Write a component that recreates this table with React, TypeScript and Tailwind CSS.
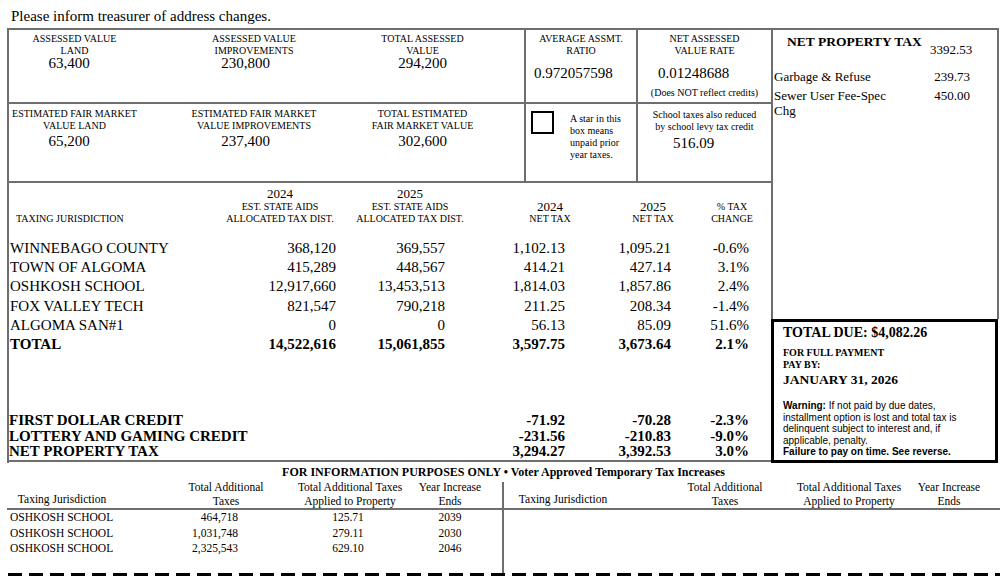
import React from 'react';

type Row = { name: string; aid24: string; aid25: string; tax24: string; tax25: string; change: string };

const rows: Row[] = [
  { name: 'WINNEBAGO COUNTY', aid24: '368,120', aid25: '369,557', tax24: '1,102.13', tax25: '1,095.21', change: '-0.6%' },
  { name: 'TOWN OF ALGOMA', aid24: '415,289', aid25: '448,567', tax24: '414.21', tax25: '427.14', change: '3.1%' },
  { name: 'OSHKOSH SCHOOL', aid24: '12,917,660', aid25: '13,453,513', tax24: '1,814.03', tax25: '1,857.86', change: '2.4%' },
  { name: 'FOX VALLEY TECH', aid24: '821,547', aid25: '790,218', tax24: '211.25', tax25: '208.34', change: '-1.4%' },
  { name: 'ALGOMA SAN#1', aid24: '0', aid25: '0', tax24: '56.13', tax25: '85.09', change: '51.6%' },
];

const credits = [
  { name: 'FIRST DOLLAR CREDIT', tax24: '-71.92', tax25: '-70.28', change: '-2.3%' },
  { name: 'LOTTERY AND GAMING CREDIT', tax24: '-231.56', tax25: '-210.83', change: '-9.0%' },
  { name: 'NET PROPERTY TAX', tax24: '3,294.27', tax25: '3,392.53', change: '3.0%' },
];

const increases = [
  { name: 'OSHKOSH SCHOOL', total: '464,718', applied: '125.71', ends: '2039' },
  { name: 'OSHKOSH SCHOOL', total: '1,031,748', applied: '279.11', ends: '2030' },
  { name: 'OSHKOSH SCHOOL', total: '2,325,543', applied: '629.10', ends: '2046' },
];

const cols = 'grid grid-cols-[227px_100px_109px_120px_106px_78px]';

function ValueCell({ label, value, className, numClass }: { label: string[]; value: string; className: string; numClass?: string }) {
  return (
    <div className={className}>
      {label.map((l) => (
        <div key={l} className="text-[10px] leading-[12px] text-center whitespace-nowrap">{l}</div>
      ))}
      <div className={`text-[15px] leading-[12px] text-center ${numClass ?? ''}`}>{value}</div>
    </div>
  );
}

function IncreaseHeader({ offsets }: { offsets: string[] }) {
  return (
    <div className="flex items-end h-[28px] text-[11.5px] leading-[14px] border-b-2 border-[#6e6e6e] text-center whitespace-nowrap">
      <div className={`w-[110px] pb-[2px] ${offsets[0]}`}>Taxing Jurisdiction</div>
      <div className={`w-[110px] ${offsets[1]}`}>Total Additional<br />Taxes</div>
      <div className={`w-[124px] ${offsets[2]}`}>Total Additional Taxes<br />Applied to Property</div>
      <div className={`w-[70px] ${offsets[3]}`}>Year Increase<br />Ends</div>
    </div>
  );
}

export default function App() {
  return (
    <div className="w-[1002px] h-[577px] overflow-hidden bg-white text-black font-['Liberation_Serif','Times_New_Roman',serif]">
      <div className="h-[28px] pl-[11px] pt-[7px] text-[15px] leading-[18px]">Please inform treasurer of address changes.</div>

      <div className="flex ml-[7px]">
        {/* main box */}
        <div className="w-[764px] border-l-2 border-t-2 border-[#6e6e6e]">
          <div className="flex h-[74px] border-b-2 border-[#6e6e6e]">
            <ValueCell className="w-[131px] pt-[3px]" label={['ASSESSED VALUE', 'LAND']} value="63,400" numClass="pr-[11px]" />
            <ValueCell className="w-[228px] pt-[3px]" label={['ASSESSED VALUE', 'IMPROVEMENTS']} value="230,800" numClass="pr-[17px]" />
            <ValueCell className="w-[109px] pt-[3px]" label={['TOTAL ASSESSED', 'VALUE']} value="294,200" />
            <div className="w-[47px]" />
            <div className="w-[112px] border-l-2 border-[#6e6e6e] pt-[3px]">
              <div className="text-[10px] leading-[12px] text-center">AVERAGE ASSMT.<br />RATIO</div>
              <div className="mt-[7px] pl-[8px] text-[15px] leading-[18px]">0.972057598</div>
            </div>
            <div className="w-[135px] border-l-2 border-[#6e6e6e] pt-[3px]">
              <div className="text-[10px] leading-[12px] text-center">NET ASSESSED<br />VALUE RATE</div>
              <div className="mt-[7px] pl-[20px] text-[15px] leading-[18px]">0.01248688</div>
              <div className="mt-[5px] text-[10px] leading-[12px] text-center whitespace-nowrap">(Does NOT reflect credits)</div>
            </div>
          </div>

          <div className="flex h-[79px] border-b-2 border-[#6e6e6e]">
            <div className="w-[131px] pt-[4px] text-center">
              <div className="text-[10px] leading-[12px] whitespace-nowrap">ESTIMATED FAIR MARKET<br />VALUE LAND</div>
              <div className="text-[15px] leading-[18px] pr-[11px]">65,200</div>
            </div>
            <div className="w-[228px] pt-[4px] text-center">
              <div className="text-[10px] leading-[12px] whitespace-nowrap">ESTIMATED FAIR MARKET<br />VALUE IMPROVEMENTS</div>
              <div className="text-[15px] leading-[18px] pr-[17px]">237,400</div>
            </div>
            <div className="w-[109px] pt-[4px] text-center">
              <div className="text-[10px] leading-[12px] whitespace-nowrap">TOTAL ESTIMATED<br />FAIR MARKET VALUE</div>
              <div className="text-[15px] leading-[18px]">302,600</div>
            </div>
            <div className="w-[47px]" />
            <div className="w-[112px] border-l-2 border-[#6e6e6e] flex items-start">
              <div className="mt-[7px] ml-[5px] w-[23px] h-[23px] border-2 border-black" />
              <div className="mt-[9px] ml-[16px] text-[10px] leading-[12px] whitespace-nowrap">
                A star in this<br />box means<br />unpaid prior<br />year taxes.
              </div>
            </div>
            <div className="w-[135px] border-l-2 border-[#6e6e6e] pt-[5px]">
              <div className="text-[10px] leading-[12px] text-center whitespace-nowrap">School taxes also reduced<br />by school levy tax credit</div>
              <div className="mt-[1px] pl-[35px] text-[15px] leading-[18px]">516.09</div>
            </div>
          </div>

          <div className="h-[279px] border-b-2 border-[#6e6e6e]">
            <div className="flex items-end pt-[4px] text-[10px] leading-[12px] text-center whitespace-nowrap">
              <div className="w-[211px] pl-[7px] text-left">TAXING JURISDICTION</div>
              <div className="w-[120px]"><div className="text-[13px] leading-[14px]">2024</div>EST. STATE AIDS<br />ALLOCATED TAX DIST.</div>
              <div className="w-[120px] ml-[10px]"><div className="text-[13px] leading-[14px]">2025</div>EST. STATE AIDS<br />ALLOCATED TAX DIST.</div>
              <div className="w-[80px] ml-[40px]"><div className="text-[13px] leading-[13px]">2024</div>NET TAX</div>
              <div className="w-[80px] ml-[23px]"><div className="text-[13px] leading-[13px]">2025</div>NET TAX</div>
              <div className="w-[60px] ml-[9px]">% TAX<br />CHANGE</div>
            </div>

            <div className={`${cols} mt-[14px] text-[15px] leading-[19.2px] whitespace-nowrap`}>
              {rows.map((r) => (
                <React.Fragment key={r.name}>
                  <div className="pl-[1px]">{r.name}</div>
                  <div className="text-right">{r.aid24}</div>
                  <div className="text-right">{r.aid25}</div>
                  <div className="text-right">{r.tax24}</div>
                  <div className="text-right">{r.tax25}</div>
                  <div className="text-right">{r.change}</div>
                </React.Fragment>
              ))}
              <div className="pl-[1px] font-bold">TOTAL</div>
              <div className="text-right font-bold">14,522,616</div>
              <div className="text-right font-bold">15,061,855</div>
              <div className="text-right font-bold">3,597.75</div>
              <div className="text-right font-bold">3,673.64</div>
              <div className="text-right font-bold">2.1%</div>
            </div>

            <div className={`${cols} mt-[59px] text-[15px] leading-[15.5px] font-bold whitespace-nowrap`}>
              {credits.map((c) => (
                <React.Fragment key={c.name}>
                  <div className="col-span-3">{c.name}</div>
                  <div className="text-right">{c.tax24}</div>
                  <div className="text-right">{c.tax25}</div>
                  <div className="text-right">{c.change}</div>
                </React.Fragment>
              ))}
            </div>
          </div>
        </div>

        {/* right column */}
        <div className="w-[228px]">
          <div className="h-[291px] border-l-2 border-t-2 border-r-2 border-[#6e6e6e] text-[13px]">
            <div className="flex pt-[4px]">
              <div className="w-[157px] pl-[14px] text-[13.5px] leading-[16px] font-bold whitespace-nowrap">NET PROPERTY TAX</div>
              <div className="mt-[8px] leading-[16px]">3392.53</div>
            </div>
            <div className="flex mt-[11px] leading-[15px]">
              <div className="w-[150px] pl-[1px]">Garbage &amp; Refuse</div>
              <div className="w-[47px] text-right">239.73</div>
            </div>
            <div className="flex mt-[4px] leading-[15px]">
              <div className="w-[150px] pl-[1px]">Sewer User Fee-Spec<br />Chg</div>
              <div className="w-[47px] text-right">450.00</div>
            </div>
          </div>
          <div className="w-[227px] h-[144px] border-[3px] border-black pl-[9px] pt-[3px] whitespace-nowrap">
            <div className="text-[14px] leading-[16px] font-bold">TOTAL DUE: $4,082.26</div>
            <div className="mt-[6px] text-[10px] leading-[11.5px] font-bold">FOR FULL PAYMENT<br />PAY BY:</div>
            <div className="mt-[2px] text-[13.5px] leading-[16px] font-bold">JANUARY 31, 2026</div>
            <div className="mt-[12px] text-[10px] leading-[11.5px] font-['Liberation_Sans',Arial,sans-serif]">
              <span className="font-bold">Warning:</span> If not paid by due dates,<br />
              installment option is lost and total tax is<br />
              delinquent subject to interest and, if<br />
              applicable, penalty.<br />
              <span className="font-bold">Failure to pay on time. See reverse.</span>
            </div>
          </div>
        </div>
      </div>

      {/* voter approved increases */}
      <div className="ml-[7px] w-[993px]">
        <div className="pt-[1px] text-center text-[12px] leading-[16px] font-bold whitespace-nowrap">
          FOR INFORMATION PURPOSES ONLY • Voter Approved Temporary Tax Increases
        </div>
        <div className="flex mt-[2px]">
          <div className="w-[495px]">
            <IncreaseHeader offsets={['', 'ml-[54px]', 'ml-[7px]', 'ml-[3px]']} />
            <div className="text-[11.5px] leading-[15.5px] whitespace-nowrap">
              {increases.map((i) => (
                <div key={i.total} className="flex">
                  <div className="w-[150px] pl-[3px]">{i.name}</div>
                  <div className="w-[81px] text-right">{i.total}</div>
                  <div className="w-[120px] ml-[50px] text-center">{i.applied}</div>
                  <div className="w-[70px] ml-[7px] text-center">{i.ends}</div>
                </div>
              ))}
            </div>
          </div>
          <div className="flex-1 border-l-2 border-[#6e6e6e] h-[91px]">
            <IncreaseHeader offsets={['ml-[4px]', 'ml-[52px]', 'ml-[7px]', 'ml-[3px]']} />
          </div>
        </div>
        <div className="ml-[1px] h-[3px] bg-[image:repeating-linear-gradient(to_right,#000_0px,#000_14px,transparent_14px,transparent_21px)]" />
      </div>
    </div>
  );
}
